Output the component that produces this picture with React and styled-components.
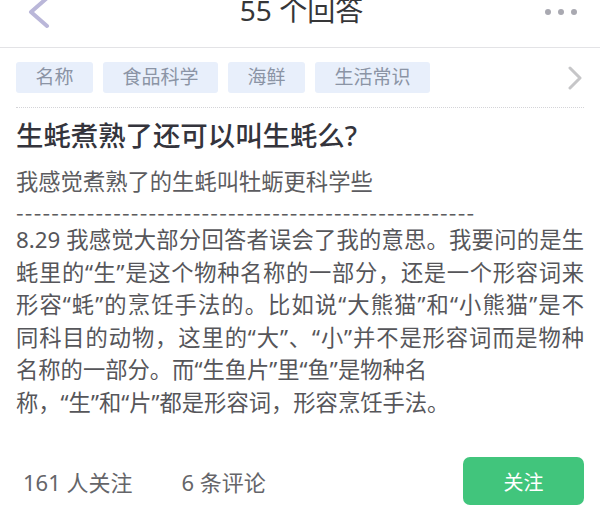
import React from "react";
import styled, { createGlobalStyle } from "styled-components";

const GlobalStyle = createGlobalStyle`
  html, body { margin: 0; padding: 0; background: #ffffff; }
  body { font-family: "Noto Sans", "Noto Sans CJK SC", sans-serif; }
  * { box-sizing: border-box; }
`;

const Page = styled.div`
  width: 600px;
  height: 516px;
  overflow: hidden;
  display: flex;
  flex-direction: column;
  background: #fff;
`;

const Header = styled.header`
  height: 48px;
  flex: none;
  border-bottom: 1px solid #e3e3e6;
  display: grid;
  grid-template-columns: 1fr auto 1fr;
  align-items: start;
  padding: 0 23px 0 26px;
`;

const BackButton = styled.button`
  justify-self: start;
  border: 0;
  background: none;
  padding: 0;
  margin-top: -3px;
  width: 26px;
  height: 32px;
  display: flex;
`;

const HeaderTitle = styled.h1`
  margin: -4px 0 0;
  font-size: 28px;
  line-height: 28px;
  font-weight: 400;
  color: #363638;
`;

const MoreButton = styled.div`
  justify-self: end;
  display: flex;
  gap: 7px;
  margin-top: 9px;
`;

const Dot = styled.span`
  width: 6px;
  height: 6px;
  border-radius: 50%;
  background: #a9a9b1;
`;

const TagsRow = styled.div`
  display: flex;
  align-items: center;
  gap: 10px;
  padding: 14px 16px 0;
`;

const Tag = styled.span`
  height: 31px;
  padding: 0 19.5px;
  border-radius: 3px;
  background: #e8effb;
  color: #8b94a5;
  font-size: 19px;
  line-height: 31px;
  white-space: nowrap;
`;

const TagsMore = styled.span`
  margin-left: auto;
  display: flex;
  margin-right: 1px;
`;

const DottedRule = styled.div`
  margin: 14px 16px 0;
  border-top: 1px dotted #d4d4d8;
`;

const Question = styled.h2`
  margin: 10px 16px 0;
  font-size: 27.4px;
  line-height: 36px;
  font-weight: 500;
  color: #34343c;
`;

const Subtitle = styled.p`
  margin: 12px 16px 0;
  font-size: 22.3px;
  line-height: 32px;
  color: #5c5c60;
`;

const Body = styled.div`
  margin: 0 16px;
  font-size: 22.3px;
  line-height: 32.5px;
  color: #56565a;
`;

const Dashes = styled.div`
  font-family: "Noto Sans CJK SC", sans-serif;
  font-size: 22px;
  letter-spacing: 1.2px;
  line-height: 26px;
  color: #5c5c60;
  white-space: nowrap;
`;

const Line = styled.div`
  white-space: nowrap;
  text-align: ${(p) => (p.$justify ? "justify" : "left")};
  text-align-last: ${(p) => (p.$justify ? "justify" : "left")};
  text-justify: inter-character;
`;

const Footer = styled.footer`
  margin-top: auto;
  display: flex;
  align-items: center;
  padding: 0 16px 11px 23px;
`;

const Stat = styled.span`
  font-size: 22px;
  color: #656569;
  margin-right: ${(p) => p.$gap || 0}px;
`;

const FollowButton = styled.button`
  margin-left: auto;
  width: 121px;
  height: 48px;
  border: 0;
  border-radius: 7px;
  background: #41c57c;
  color: #fff;
  font-family: inherit;
  font-size: 20px;
`;

const ChevronLeft = () => (
  <svg width="26" height="32" viewBox="0 0 26 32">
    <path d="M21 1 L5 15 L21 29" fill="none" stroke="#bab7d9" strokeWidth="4" strokeLinecap="round" strokeLinejoin="round" />
  </svg>
);

const ChevronRight = () => (
  <svg width="16" height="24" viewBox="0 0 16 24">
    <path d="M3 2 L13 12 L3 22" fill="none" stroke="#c6c6c8" strokeWidth="3" strokeLinecap="round" strokeLinejoin="round" />
  </svg>
);

const tags = ["名称", "食品科学", "海鲜", "生活常识"];

const lines = [
  { text: "8.29 我感觉大部分回答者误会了我的意思。我要问的是生", justify: true },
  { text: "蚝里的“生”是这个物种名称的一部分，还是一个形容词来", justify: true },
  { text: "形容“蚝”的烹饪手法的。比如说“大熊猫”和“小熊猫”是不", justify: true },
  { text: "同科目的动物，这里的“大”、“小”并不是形容词而是物种", justify: true },
  { text: "名称的一部分。而“生鱼片”里“鱼”是物种名", justify: false },
  { text: "称，“生”和“片”都是形容词，形容烹饪手法。", justify: false },
];

export default function App() {
  return (
    <>
      <GlobalStyle />
      <Page>
        <Header>
          <BackButton aria-label="返回">
            <ChevronLeft />
          </BackButton>
          <HeaderTitle>55 个回答</HeaderTitle>
          <MoreButton>
            <Dot />
            <Dot />
            <Dot />
          </MoreButton>
        </Header>
        <TagsRow>
          {tags.map((t) => (
            <Tag key={t}>{t}</Tag>
          ))}
          <TagsMore>
            <ChevronRight />
          </TagsMore>
        </TagsRow>
        <DottedRule />
        <Question>生蚝煮熟了还可以叫生蚝么?</Question>
        <Subtitle>我感觉煮熟了的生蚝叫牡蛎更科学些</Subtitle>
        <Body>
          <Dashes>{"-".repeat(52)}</Dashes>
          {lines.map((l, i) => (
            <Line key={i} $justify={l.justify}>
              {l.text}
            </Line>
          ))}
        </Body>
        <Footer>
          <Stat $gap={49}>161 人关注</Stat>
          <Stat>6 条评论</Stat>
          <FollowButton>关注</FollowButton>
        </Footer>
      </Page>
    </>
  );
}
